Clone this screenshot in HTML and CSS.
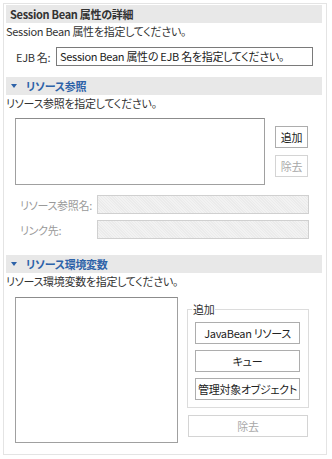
FILE: index.html
```html
<!DOCTYPE html>
<html lang="ja">
<head>
<meta charset="utf-8">
<link rel="stylesheet" href="styles.css">
</head>
<body>
<div class="panel">
  <div class="sec-head plain">Session Bean 属性の詳細</div>
  <div class="desc">Session Bean 属性を指定してください。</div>
  <div class="ejb-row">
    <span class="ejb-label">EJB 名:</span>
    <div class="input">Session Bean 属性の EJB 名を指定してください。</div>
  </div>

  <div class="sec-head blue s2"><span class="tri"></span>リソース参照</div>
  <div class="desc">リソース参照を指定してください。</div>
  <div class="ref-row">
    <div class="list list1"></div>
    <div class="btn-col">
      <div class="btn small">追加</div>
      <div class="btn small disabled">除去</div>
    </div>
  </div>
  <div class="field-row first">
    <span class="field-label">リソース参照名:</span>
    <div class="field"></div>
  </div>
  <div class="field-row">
    <span class="field-label">リンク先:</span>
    <div class="field"></div>
  </div>

  <div class="sec-head blue s3"><span class="tri"></span>リソース環境変数</div>
  <div class="desc">リソース環境変数を指定してください。</div>
  <div class="env-row">
    <div class="list list2"></div>
    <div class="env-col">
      <div class="group">
        <span class="legend">追加</span>
        <div class="btn wide">JavaBean リソース</div>
        <div class="btn wide">キュー</div>
        <div class="btn wide">管理対象オブジェクト</div>
      </div>
      <div class="btn remove disabled">除去</div>
    </div>
  </div>
</div>
</body>
</html>
```

FILE: styles.css
```css
* { box-sizing: border-box; }
html, body { margin: 0; padding: 0; background: #fff; }
body {
  font-family: "Noto Sans CJK JP", "Noto Sans", sans-serif;
  font-size: 11px;
  font-feature-settings: "palt";
  letter-spacing: -0.3px;
  color: #333;
  width: 332px;
  height: 459px;
}
.panel {
  margin: 3px 0 0 3px;
  width: 324px;
  height: 452px;
  border: 1px solid #e4e4e4;
  padding: 1px 4px 0 2px;
}
.sec-head {
  height: 18px;
  line-height: 18px;
  background: #e8e8e8;
  padding-left: 4px;
  display: flex;
  align-items: center;
  white-space: nowrap;
}
.sec-head.plain { font-weight: 600; color: #333; }
.sec-head.blue { color: #2d62a8; font-weight: 700; padding-left: 5px; }
.sec-head.s2 { margin-top: 11px; }
.sec-head.s3 { margin-top: 16px; }
.tri {
  width: 0; height: 0;
  border-left: 3.5px solid transparent;
  border-right: 3.5px solid transparent;
  border-top: 4px solid #2d62a8;
  margin-right: 9px;
}
.desc {
  height: 14px;
  line-height: 14px;
  margin-top: 1px;
  white-space: nowrap;
}
.ejb-row {
  display: flex;
  align-items: center;
  margin-top: 9px;
  padding-left: 10px;
}
.ejb-label { width: 40px; }
.input {
  width: 257px;
  height: 19px;
  line-height: 17px;
  border: 1px solid #7a7a7a;
  padding-left: 3px;
  white-space: nowrap;
  overflow: hidden;
  color: #222;
}
.ref-row {
  display: flex;
  margin-top: 8px;
  padding-left: 9px;
}
.list {
  border: 1px solid #a0a0a0;
  border-top-color: #8c8c8c;
  background: #fff;
}
.list1 { width: 250px; height: 67px; }
.btn-col {
  display: flex;
  flex-direction: column;
  gap: 7px;
  margin-left: 10px;
  margin-top: 8px;
}
.btn {
  border: 1px solid #adadad;
  background: #fff;
  height: 22px;
  line-height: 20px;
  text-align: center;
  white-space: nowrap;
  color: #222;
}
.btn.small { width: 33px; }
.btn.disabled { color: #a8a8a8; border-color: #d4d4d4; }
.field-row {
  display: flex;
  align-items: center;
  margin-top: 6px;
  padding-left: 14px;
}
.field-row.first { margin-top: 10px; }
.field-label { width: 77px; color: #9a9a9a; white-space: nowrap; }
.field {
  width: 212px;
  height: 19px;
  border: 1px solid #d0d0d0;
  background:
    repeating-linear-gradient(45deg, #f2f2f2 0 1px, #ebebeb 1px 2px);
}
.env-row {
  display: flex;
  margin-top: 9px;
  padding-left: 9px;
}
.list2 { width: 163px; height: 146px; }
.env-col {
  margin-left: 9px;
  margin-top: 3px;
  width: 122px;
}
.group {
  position: relative;
  border: 1px solid #dcdcdc;
  margin-top: 9px;
  height: 99px;
  padding: 12px 8px 0 7px;
  display: flex;
  flex-direction: column;
  gap: 6px;
}
.legend {
  position: absolute;
  top: -9px;
  left: 4px;
  background: #fff;
  padding: 0 1px;
  line-height: 16px;
}
.btn.wide { width: 105px; }
.btn.remove { width: 120px; margin-top: 7px; margin-left: 1px; }
```
